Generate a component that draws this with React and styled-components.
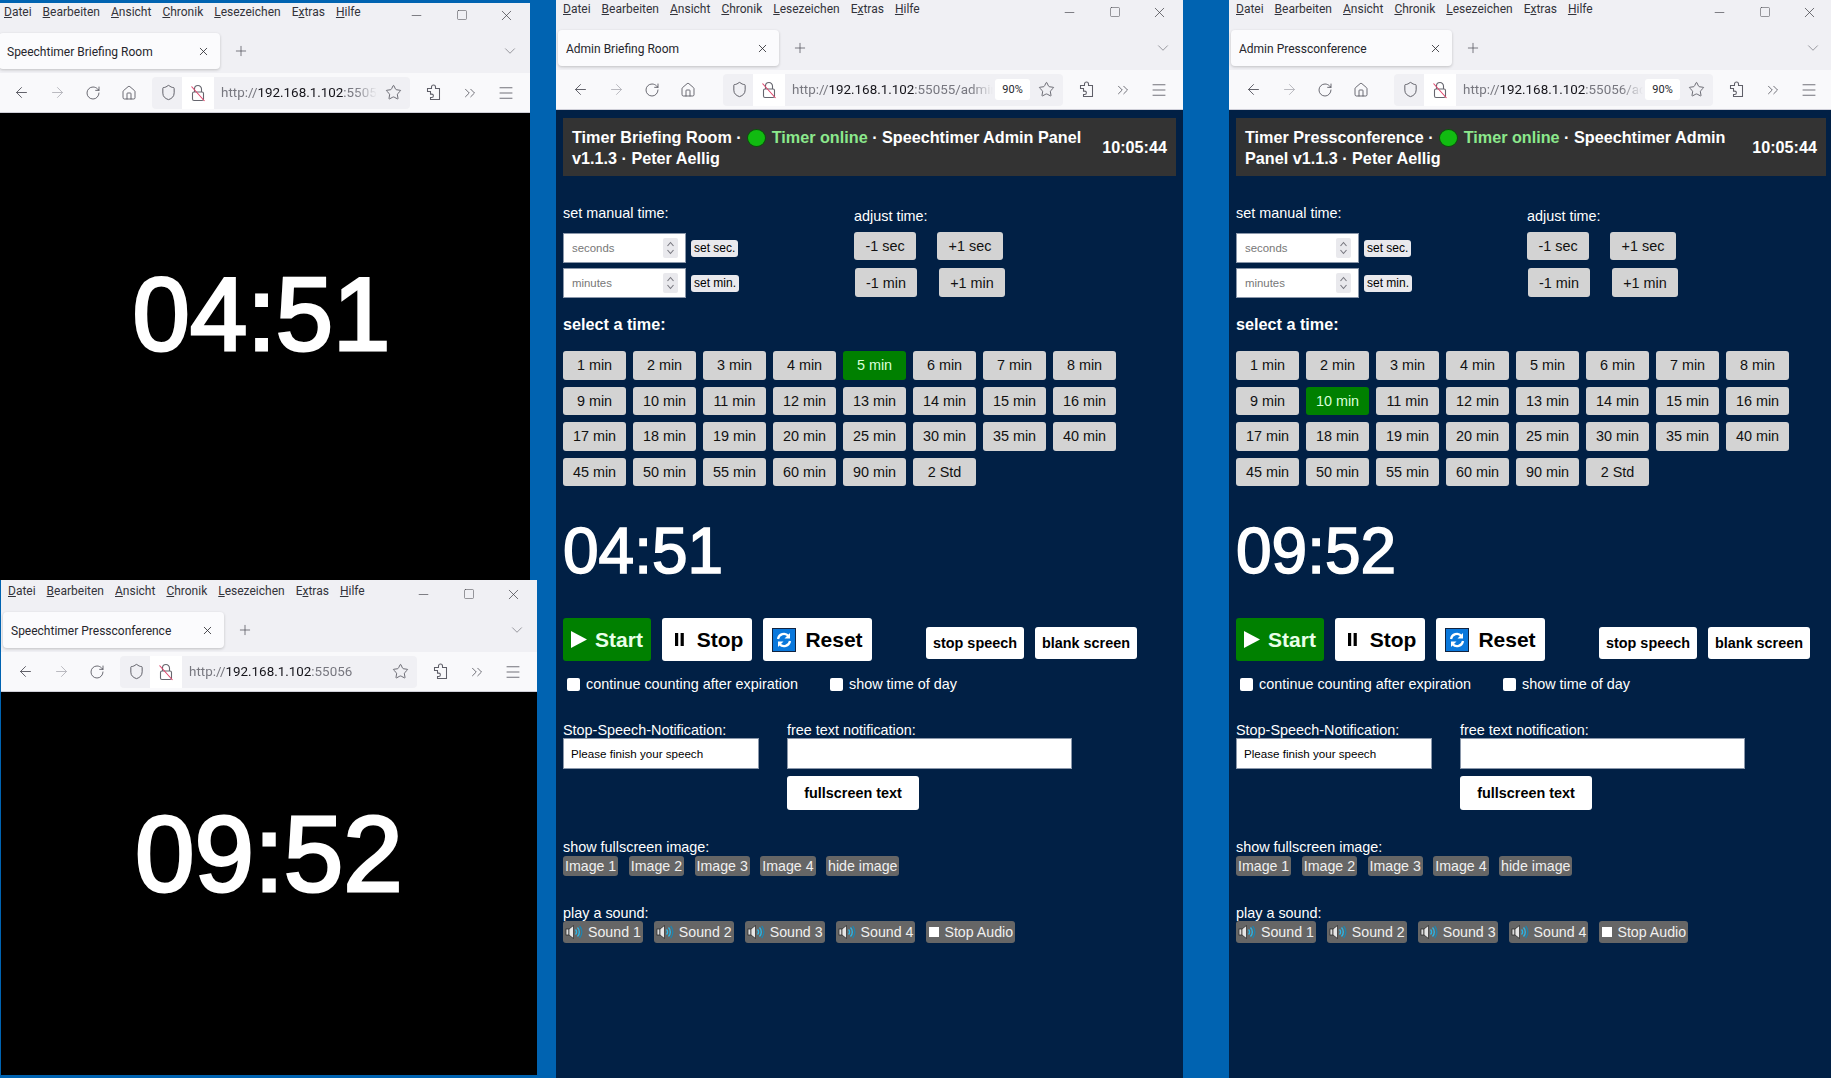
import React from "react"
import styled, { createGlobalStyle } from "styled-components"
import {
  ArrowLeft,
  ArrowRight,
  ChevronDown,
  ChevronsRight,
  Home,
  Menu,
  Minus,
  Plus,
  RotateCw,
  Shield,
  Square,
  Star,
  X,
} from "lucide-react"

const GlobalStyle = createGlobalStyle`
  html, body {
    margin: 0;
    padding: 0;
    overflow: hidden;
    background: #0063b1;
  }
`

const Desktop = styled.div`
  position: relative;
  width: 1831px;
  height: 1078px;
  overflow: hidden;
  background: #0063b1;
`

const Window = styled.div`
  position: absolute;
  left: ${p => p.$left}px;
  top: ${p => p.$top}px;
  width: ${p => p.$width}px;
  height: ${p => p.$height}px;
  padding-top: ${p => p.$inset || 0}px;
  box-sizing: border-box;
  display: flex;
  flex-direction: column;
  background: #f0f0f4;
  overflow: hidden;
`

const TitleBar = styled.div`
  height: 30px;
  display: flex;
  justify-content: space-between;
  background: #f0f0f4;
  flex: none;
`

const MenuBar = styled.div`
  display: flex;
  gap: 11px;
  padding: 2px 0 0 7px;
  font: 12px/14px Roboto, sans-serif;
  color: #33333a;
`

const AccessKey = styled.span`
  text-decoration: underline;
`

const WindowControls = styled.div`
  display: flex;
  padding-right: 1px;
  color: #3a3a40;
`

const ControlButton = styled.div`
  width: 45px;
  height: 24px;
  display: flex;
  align-items: center;
  justify-content: center;
`

const TabStrip = styled.div`
  height: 40px;
  flex: none;
  display: flex;
  align-items: flex-start;
  padding-left: 2px;
  color: #4d4d55;
`

const Tab = styled.div`
  width: 221px;
  height: 36px;
  box-sizing: border-box;
  padding: 1px 10px 0 8px;
  display: flex;
  align-items: center;
  justify-content: space-between;
  background: #fbfbfd;
  border-radius: 4px;
  box-shadow: 0 1px 3px rgba(0, 0, 0, 0.2);
  font: 12px Roboto, sans-serif;
  color: #26262c;
`

const NewTab = styled.div`
  margin-left: 13px;
  height: 36px;
  display: flex;
  align-items: center;
`

const TabList = styled.div`
  margin-left: auto;
  margin-right: 11px;
  height: 36px;
  display: flex;
  align-items: center;
  color: #85858c;
`

const Toolbar = styled.div`
  height: 40px;
  flex: none;
  box-sizing: border-box;
  display: flex;
  align-items: center;
  padding: 0 6px;
  background: #f9f9fb;
  border-bottom: 1px solid #cfcfd8;
`

const ToolButton = styled.div`
  width: 36px;
  height: 32px;
  flex: none;
  display: flex;
  align-items: center;
  justify-content: center;
  color: ${p => (p.$disabled ? "#b4b4ba" : "#55555e")};
`

const UrlBar = styled.div`
  flex: 1;
  min-width: 0;
  height: 32px;
  margin-left: ${p => p.$gap}px;
  margin-right: 6px;
  padding-left: 6px;
  display: flex;
  align-items: center;
  background: #f0f0f4;
  border-radius: 4px;
`

const ShieldSlot = styled.div`
  width: 20px;
  margin-right: 4px;
  flex: none;
  display: flex;
  justify-content: center;
  color: #55555e;
`

const LockSlot = styled.div`
  width: 32px;
  height: 32px;
  flex: none;
  display: flex;
  align-items: center;
  justify-content: center;
  background: #fff;
`

const UrlText = styled.div`
  flex: 1;
  min-width: 0;
  margin-left: 7px;
  overflow: hidden;
  white-space: nowrap;
  font: 13.4px Roboto, sans-serif;
  color: #77777f;
  mask-image: linear-gradient(to left, transparent 0, #000 22px);
`

const UrlHost = styled.span`
  color: #15141a;
`

const ZoomBadge = styled.div`
  width: 35px;
  height: 21px;
  flex: none;
  margin-left: 2px;
  display: flex;
  align-items: center;
  justify-content: center;
  background: #fff;
  border-radius: 3px;
  font: 11px Roboto, sans-serif;
  color: #26262c;
`

const StarSlot = styled.div`
  width: 33px;
  flex: none;
  display: flex;
  justify-content: center;
  color: #55555e;
`

const LockIcon = () => (
  <svg width="18" height="20" viewBox="0 0 18 20" fill="none">
    <path d="M5.5 9V6a3.5 3.5 0 0 1 7 0v3" stroke="#66666e" strokeWidth="1.1" />
    <rect x="3.5" y="9" width="11" height="8.5" rx="1.5" stroke="#66666e" strokeWidth="1.1" />
    <path d="M2.5 3.5 15.5 18" stroke="#e0466c" strokeWidth="1.1" />
  </svg>
)

const PuzzleIcon = () => (
  <svg width="18" height="20" viewBox="0 0 18 20" fill="none" stroke="#5f5f68" strokeWidth="1.05">
    <path d="M2.5 5.5h4V4a2 2 0 0 1 4 0v1.5h4v11h-9v-2h1.2a1.7 1.7 0 0 0 0-3.4H5.5V8.5h-3z" />
  </svg>
)

const SpeakerIcon = () => (
  <svg width="18" height="16" viewBox="0 0 18 16" fill="none">
    <rect x="1" y="5" width="3" height="6" fill="#dcdcdc" stroke="#222" strokeWidth="0.7" />
    <path d="M4 5 8.5 1.5v13L4 11z" fill="#e6e6e6" stroke="#222" strokeWidth="0.7" />
    <path d="M10.5 5.5a3.5 3.5 0 0 1 0 5" stroke="#2cb4e4" strokeWidth="1.4" />
    <path d="M12.5 3.5a6.5 6.5 0 0 1 0 9" stroke="#2cb4e4" strokeWidth="1.4" />
    <path d="M14.6 2a9 9 0 0 1 0 12" stroke="#1a86b4" strokeWidth="1.2" />
  </svg>
)

const ResetIcon = () => (
  <svg width="24" height="24" viewBox="0 0 24 24">
    <rect x="0.5" y="0.5" width="23" height="23" fill="#0a78dc" stroke="#12233f" />
    <path d="M6 11a6 6 0 0 1 10.5-3" fill="none" stroke="#fff" strokeWidth="2.2" />
    <path d="M18 5v5.5h-5.5z" fill="#fff" />
    <path d="M18 13a6 6 0 0 1-10.5 3" fill="none" stroke="#fff" strokeWidth="2.2" />
    <path d="M6 19v-5.5h5.5z" fill="#fff" />
  </svg>
)

const PlayIcon = () => (
  <svg width="16" height="17" viewBox="0 0 16 17">
    <path d="M0 0 16 8.5 0 17z" fill="#fff" />
  </svg>
)

const PauseIcon = () => (
  <svg width="9" height="13" viewBox="0 0 9 13">
    <rect x="0" y="0" width="3.2" height="13" fill="#000" />
    <rect x="5.6" y="0" width="3.2" height="13" fill="#000" />
  </svg>
)

const Access = ({ before, letter, after }) => (
  <span>
    {before}
    <AccessKey>{letter}</AccessKey>
    {after}
  </span>
)

const BrowserChrome = ({ title, urlHost, urlTail, home, urlGap, zoom }) => (
  <>
    <TitleBar>
      <MenuBar>
        <Access letter="D" after="atei" />
        <Access letter="B" after="earbeiten" />
        <Access letter="A" after="nsicht" />
        <Access letter="C" after="hronik" />
        <Access letter="L" after="esezeichen" />
        <Access before="E" letter="x" after="tras" />
        <Access letter="H" after="ilfe" />
      </MenuBar>
      <WindowControls>
        <ControlButton><Minus size={15} strokeWidth={1} /></ControlButton>
        <ControlButton><Square size={12} strokeWidth={1} /></ControlButton>
        <ControlButton><X size={17} strokeWidth={1} /></ControlButton>
      </WindowControls>
    </TitleBar>
    <TabStrip>
      <Tab>
        {title}
        <X size={13} strokeWidth={1.5} />
      </Tab>
      <NewTab><Plus size={16} strokeWidth={1.1} /></NewTab>
      <TabList><ChevronDown size={18} strokeWidth={1.1} /></TabList>
    </TabStrip>
    <Toolbar>
      <ToolButton><ArrowLeft size={17} strokeWidth={1.3} /></ToolButton>
      <ToolButton $disabled><ArrowRight size={17} strokeWidth={1.3} /></ToolButton>
      <ToolButton><RotateCw size={16} strokeWidth={1.3} /></ToolButton>
      {home && <ToolButton><Home size={16} strokeWidth={1.3} /></ToolButton>}
      <UrlBar $gap={urlGap}>
        <ShieldSlot><Shield size={17} strokeWidth={1.3} /></ShieldSlot>
        <LockSlot><LockIcon /></LockSlot>
        <UrlText>
          http://<UrlHost>{urlHost}</UrlHost>{urlTail}
        </UrlText>
        {zoom && <ZoomBadge>{zoom}</ZoomBadge>}
        <StarSlot><Star size={17} strokeWidth={1.2} /></StarSlot>
      </UrlBar>
      <ToolButton><PuzzleIcon /></ToolButton>
      <ToolButton><ChevronsRight size={18} strokeWidth={1.1} /></ToolButton>
      <ToolButton><Menu size={18} strokeWidth={1.1} /></ToolButton>
    </Toolbar>
  </>
)

const TimerFace = styled.div`
  flex: 1;
  background: #000;
  color: #fff;
  text-align: center;
  box-sizing: border-box;
  padding: ${p => p.$top}px ${p => p.$shift || 0}px 0 0;
  font: ${p => p.$size}px/${p => p.$size}px "Liberation Sans", Arial, sans-serif;
  -webkit-text-stroke: 3px #fff;
`

const Panel = styled.div`
  flex: 1;
  background: #012045;
  padding: 8px 7px 0;
  color: #fff;
  font: 14.4px/16px "Liberation Sans", Arial, sans-serif;
`

const HeaderBar = styled.div`
  height: 58px;
  box-sizing: border-box;
  padding: 1px 9px 0 9px;
  display: flex;
  align-items: center;
  justify-content: space-between;
  gap: 14px;
  background: #333;
  font-weight: bold;
  font-size: 16.2px;
  line-height: 21px;
`

const HeaderTitle = styled.div`
  flex: 1;
`

const OnlineDot = styled.span`
  display: inline-block;
  width: 19px;
  height: 18px;
  box-sizing: border-box;
  margin: 0 1px;
  vertical-align: -4px;
  border-radius: 50%;
  background: #11bb11;
  border: 1px solid #0a500a;
`

const OnlineText = styled.span`
  color: #8ce88c;
`

const ManualRow = styled.div`
  display: flex;
  margin-top: 29px;
`

const ManualColumn = styled.div`
  width: 291px;
  display: flex;
  flex-direction: column;
  gap: 5px;
`

const FieldLabel = styled.div`
  height: 16px;
  margin-bottom: ${p => p.$gap || 0}px;
`

const SetRow = styled.div`
  display: flex;
  align-items: center;
  gap: 5px;
`

const NumberField = styled.div`
  width: 123px;
  height: 30px;
  box-sizing: border-box;
  padding: 0 7px 0 8px;
  display: flex;
  align-items: center;
  background: #fff;
  border: 1px solid #8a97aa;
`

const NumberInput = styled.input`
  flex: 1;
  min-width: 0;
  border: 0;
  outline: 0;
  padding: 0;
  font: 11.4px "Liberation Sans", Arial, sans-serif;
  &::placeholder {
    color: #777;
    opacity: 1;
  }
`

const Spinner = styled.div`
  width: 15px;
  height: 20px;
  flex: none;
  display: flex;
  align-items: center;
  justify-content: center;
  background: #e9e9ed;
  border-radius: 2px;
`

const SetButton = styled.div`
  height: 17px;
  padding: 0 3px;
  display: flex;
  align-items: center;
  background: #e9e9ed;
  border-radius: 3px;
  color: #000;
  font-size: 12px;
`

const AdjustColumn = styled.div`
  padding-top: 3px;
`

const AdjustRow = styled.div`
  display: flex;
  gap: ${p => p.$gap}px;
  padding-left: ${p => p.$indent || 0}px;

  & + & {
    margin-top: 8px;
  }
`

const GreyButton = styled.div`
  height: ${p => p.$height || 28}px;
  width: ${p => p.$width}px;
  display: flex;
  align-items: center;
  justify-content: center;
  background: #d3d3d3;
  border-radius: 3px;
  color: #111;
`

const SectionTitle = styled.div`
  margin-top: 18px;
  height: 16px;
  font-weight: bold;
  font-size: 16.2px;
`

const PresetGrid = styled.div`
  margin-top: 19px;
  width: 553px;
  display: grid;
  grid-template-columns: repeat(8, 63px);
  grid-auto-rows: 28.5px;
  gap: 7px;
`

const Preset = styled.div`
  display: flex;
  align-items: center;
  justify-content: center;
  border-radius: 3px;
  background: ${p => (p.$active ? "#008000" : "#d3d3d3")};
  color: ${p => (p.$active ? "#d9ffd9" : "#111")};
`

const BigTime = styled.div`
  margin-top: 34px;
  height: 62px;
  font: 64px/62px "Liberation Sans", Arial, sans-serif;
  -webkit-text-stroke: 1.6px #fff;
`

const ActionRow = styled.div`
  margin-top: 36px;
  display: flex;
  align-items: flex-end;
  gap: 11px;
`

const MainAction = styled.div`
  width: ${p => p.$width}px;
  height: 43px;
  box-sizing: border-box;
  padding-left: ${p => p.$lead || 0}px;
  display: flex;
  align-items: center;
  justify-content: center;
  gap: ${p => p.$gap}px;
  border-radius: 3px;
  background: ${p => (p.$go ? "#008000" : "#fff")};
  color: ${p => (p.$go ? "#e8ffe8" : "#000")};
  font: bold 21px "Liberation Sans", Arial, sans-serif;
`

const SmallAction = styled.div`
  width: ${p => p.$width}px;
  height: ${p => p.$height || 32}px;
  margin-left: ${p => p.$push || 0}px;
  margin-bottom: ${p => (p.$lift ? 2 : 0)}px;
  display: flex;
  align-items: center;
  justify-content: center;
  border-radius: 3px;
  background: #fff;
  color: #000;
  font-weight: bold;
`

const CheckRow = styled.div`
  margin-top: 15px;
  padding-left: 4px;
  display: flex;
  align-items: center;
`

const CheckOption = styled.label`
  width: ${p => p.$width}px;
  display: flex;
  align-items: center;
  gap: 6px;
`

const CheckBox = styled.input`
  appearance: none;
  width: 13px;
  height: 13px;
  margin: 0;
  background: #fff;
  border-radius: 2px;
`

const NotifyRow = styled.div`
  margin-top: 30px;
  display: flex;
  gap: 28px;
`

const NotifyColumn = styled.div`
  width: ${p => p.$width}px;
`

const TextField = styled.input`
  width: 100%;
  height: 31px;
  box-sizing: border-box;
  padding: 0 7px;
  border: 1px solid #8a97aa;
  outline: 0;
  background: #fff;
  color: #000;
  font: 11.6px "Liberation Sans", Arial, sans-serif;
`

const Section = styled.div`
  margin-top: 29px;
`

const ChipRow = styled.div`
  display: flex;
  gap: ${p => p.$gap || 11}px;
  margin-top: ${p => p.$top || 0}px;
`

const Chip = styled.div`
  height: ${p => p.$height}px;
  padding: 0 2px;
  display: flex;
  align-items: center;
  gap: ${p => p.$gap || 0}px;
  background: #666;
  border-radius: 3px;
  color: #f0f0f0;
  font-size: 14.2px;
`

const StopMark = styled.span`
  width: 10px;
  height: 10px;
  margin-left: 1px;
  background: #fff;
`

const presets = [
  "1 min", "2 min", "3 min", "4 min", "5 min", "6 min", "7 min", "8 min",
  "9 min", "10 min", "11 min", "12 min", "13 min", "14 min", "15 min", "16 min",
  "17 min", "18 min", "19 min", "20 min", "25 min", "30 min", "35 min", "40 min",
  "45 min", "50 min", "55 min", "60 min", "90 min", "2 Std",
]

const SpinArrows = () => (
  <Spinner>
    <svg width="9" height="16" viewBox="0 0 9 16" fill="none" stroke="#77777f" strokeWidth="1.1">
      <path d="M1.5 6 4.5 2.5 7.5 6" />
      <path d="M1.5 10 4.5 13.5 7.5 10" />
    </svg>
  </Spinner>
)

const AdminPanel = ({ room, time, active }) => (
  <Panel>
    <HeaderBar>
      <HeaderTitle>
        {room} · <OnlineDot /> <OnlineText>Timer online</OnlineText> · Speechtimer Admin Panel v1.1.3 · Peter Aellig
      </HeaderTitle>
      <div>10:05:44</div>
    </HeaderBar>

    <ManualRow>
      <ManualColumn>
        <FieldLabel $gap={7}>set manual time:</FieldLabel>
        <SetRow>
          <NumberField>
            <NumberInput placeholder="seconds" />
            <SpinArrows />
          </NumberField>
          <SetButton>set sec.</SetButton>
        </SetRow>
        <SetRow>
          <NumberField>
            <NumberInput placeholder="minutes" />
            <SpinArrows />
          </NumberField>
          <SetButton>set min.</SetButton>
        </SetRow>
      </ManualColumn>
      <AdjustColumn>
        <FieldLabel $gap={8}>adjust time:</FieldLabel>
        <AdjustRow $gap={21}>
          <GreyButton $width={62}>-1 sec</GreyButton>
          <GreyButton $width={66}>+1 sec</GreyButton>
        </AdjustRow>
        <AdjustRow $gap={22} $indent={1}>
          <GreyButton $width={62} $height={29}>-1 min</GreyButton>
          <GreyButton $width={66} $height={29}>+1 min</GreyButton>
        </AdjustRow>
      </AdjustColumn>
    </ManualRow>

    <SectionTitle>select a time:</SectionTitle>
    <PresetGrid>
      {presets.map(label => (
        <Preset key={label} $active={label === active}>{label}</Preset>
      ))}
    </PresetGrid>

    <BigTime>{time}</BigTime>

    <ActionRow>
      <MainAction $width={88} $go $gap={8}><PlayIcon />Start</MainAction>
      <MainAction $width={90} $gap={13} $lead={4}><PauseIcon />Stop</MainAction>
      <MainAction $width={109} $gap={9}><ResetIcon />Reset</MainAction>
      <SmallAction $width={98} $push={43} $lift>stop speech</SmallAction>
      <SmallAction $width={102} $lift>blank screen</SmallAction>
    </ActionRow>

    <CheckRow>
      <CheckOption $width={263}><CheckBox type="checkbox" />continue counting after expiration</CheckOption>
      <CheckOption><CheckBox type="checkbox" />show time of day</CheckOption>
    </CheckRow>

    <NotifyRow>
      <NotifyColumn $width={196}>
        <FieldLabel>Stop-Speech-Notification:</FieldLabel>
        <TextField defaultValue="Please finish your speech" />
      </NotifyColumn>
      <NotifyColumn $width={285}>
        <FieldLabel>free text notification:</FieldLabel>
        <TextField />
        <ChipRow $top={7}>
          <SmallAction $width={132} $height={34}>fullscreen text</SmallAction>
        </ChipRow>
      </NotifyColumn>
    </NotifyRow>

    <Section>
      <FieldLabel>show fullscreen image:</FieldLabel>
      <ChipRow $top={1} $gap={10.5}>
        {["Image 1", "Image 2", "Image 3", "Image 4", "hide image"].map(label => (
          <Chip key={label} $height={20}>{label}</Chip>
        ))}
      </ChipRow>
    </Section>

    <Section>
      <FieldLabel>play a sound:</FieldLabel>
      <ChipRow>
        {["Sound 1", "Sound 2", "Sound 3", "Sound 4"].map(label => (
          <Chip key={label} $height={22} $gap={5}><SpeakerIcon />{label}</Chip>
        ))}
        <Chip $height={22} $gap={5}><StopMark />Stop Audio</Chip>
      </ChipRow>
    </Section>
  </Panel>
)

export default function App() {
  return (
    <Desktop>
      <GlobalStyle />
      <Window $left={-3} $top={3} $width={533} $height={577}>
        <BrowserChrome title="Speechtimer Briefing Room" urlHost="192.168.1.102" urlTail=":55055" home urlGap={5} />
        <TimerFace $top={150} $shift={4} $size={103}>04:51</TimerFace>
      </Window>
      <Window $left={1} $top={580} $width={536} $height={495} $inset={2}>
        <BrowserChrome title="Speechtimer Pressconference" urlHost="192.168.1.102" urlTail=":55056" urlGap={5} />
        <TimerFace $top={109} $size={107}>09:52</TimerFace>
      </Window>
      <Window $left={556} $top={0} $width={627} $height={1078}>
        <BrowserChrome title="Admin Briefing Room" urlHost="192.168.1.102" urlTail=":55055/admin" home urlGap={17} zoom="90%" />
        <AdminPanel room="Timer Briefing Room" time="04:51" active="5 min" />
      </Window>
      <Window $left={1229} $top={0} $width={604} $height={1078}>
        <BrowserChrome title="Admin Pressconference" urlHost="192.168.1.102" urlTail=":55056/admin" home urlGap={15} zoom="90%" />
        <AdminPanel room="Timer Pressconference" time="09:52" active="10 min" />
      </Window>
    </Desktop>
  )
}
